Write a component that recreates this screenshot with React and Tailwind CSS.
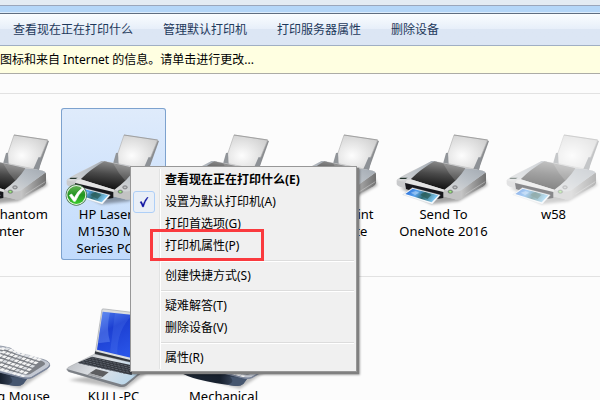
import clsx from 'clsx';

const toolbarItems = ['查看现在正在打印什么', '管理默认打印机', '打印服务器属性', '删除设备'];

const printers = [
  { id: 'foxit', lines: ['Foxit Phantom', 'Printer'] },
  { id: 'hp', lines: ['HP LaserJet', 'M1530 MFP', 'Series PCL 6'], selected: true, isDefault: true },
  { id: 'fax', lines: ['Fax'] },
  { id: 'print', lines: ['Remote Print', 'PDF Create'] },
  { id: 'onenote', lines: ['Send To', 'OneNote 2016'] },
  { id: 'w58', lines: ['w58'], offline: true },
];

const devices = [
  { id: 'mouse', lines: ['Gaming Mouse'], icon: KeyboardIcon },
  { id: 'pc', lines: ['KULL-PC'], icon: LaptopIcon },
  { id: 'keyboard', lines: ['Mechanical', 'Keyboard'], icon: KeyboardIcon },
];

const menuGroups = [
  [
    { label: '查看现在正在打印什么(E)', bold: true },
    { label: '设置为默认打印机(A)', checked: true },
    { label: '打印首选项(G)' },
    { label: '打印机属性(P)', highlighted: true },
  ],
  [{ label: '创建快捷方式(S)' }],
  [{ label: '疑难解答(T)' }, { label: '删除设备(V)' }],
  [{ label: '属性(R)' }],
];

// Gradients shared by every device icon
function IconDefs() {
  return (
    <svg className="absolute size-0" aria-hidden="true">
      <defs>
        <radialGradient id="paper" cx="0.4" cy="0.6" r="0.7">
          <stop offset="0" stopColor="#fdfdfd" />
          <stop offset="1" stopColor="#cfcfcf" />
        </radialGradient>
        <linearGradient id="lid" x1="0.6" y1="0" x2="0.4" y2="1">
          <stop offset="0" stopColor="#8d8d8d" />
          <stop offset="0.45" stopColor="#4a4a4a" />
          <stop offset="1" stopColor="#0c0c0c" />
        </linearGradient>
        <linearGradient id="arm" x1="1" y1="0" x2="0" y2="1">
          <stop offset="0" stopColor="#a3aab2" />
          <stop offset="0.5" stopColor="#bcc2c8" />
          <stop offset="1" stopColor="#dcdcdc" />
        </linearGradient>
        <linearGradient id="side" x1="0" y1="0" x2="1" y2="0">
          <stop offset="0" stopColor="#c9c9c9" />
          <stop offset="0.5" stopColor="#9a9a9a" />
          <stop offset="1" stopColor="#707070" />
        </linearGradient>
        <linearGradient id="photo" x1="0" y1="0" x2="1" y2="0.3">
          <stop offset="0" stopColor="#1c62d4" />
          <stop offset="0.4" stopColor="#5aa4ee" />
          <stop offset="0.65" stopColor="#2f6b70" />
          <stop offset="1" stopColor="#7cc4ee" />
        </linearGradient>
        <linearGradient id="badge" x1="0" y1="0" x2="0" y2="1">
          <stop offset="0" stopColor="#62b052" />
          <stop offset="0.5" stopColor="#219420" />
          <stop offset="1" stopColor="#3ccb2c" />
        </linearGradient>
        <linearGradient id="screen" x1="0" y1="0" x2="0.5" y2="1">
          <stop offset="0" stopColor="#4d7cec" />
          <stop offset="0.4" stopColor="#1c3fd2" />
          <stop offset="1" stopColor="#2a55e8" />
        </linearGradient>
        <linearGradient id="base" x1="0" y1="0" x2="1" y2="0.4">
          <stop offset="0" stopColor="#b3b6bb" />
          <stop offset="0.5" stopColor="#dfe2e6" />
          <stop offset="1" stopColor="#b9d6ea" />
        </linearGradient>
        <linearGradient id="rest" x1="0" y1="0" x2="1" y2="0">
          <stop offset="0" stopColor="#1e2734" />
          <stop offset="0.6" stopColor="#17202e" />
          <stop offset="1" stopColor="#5b6c88" />
        </linearGradient>
        <filter id="soft" x="-20%" y="-20%" width="140%" height="140%">
          <feGaussianBlur stdDeviation="4" />
        </filter>
      </defs>
    </svg>
  );
}

function PrinterIcon({ isDefault }) {
  return (
    <svg viewBox="3 0 315 255" className="block w-full" aria-hidden="true">
      <path d="M30 188 L125 238 L205 229 L292 181 L284 160 Z" fill="#000" opacity="0.35" filter="url(#soft)" />
      {/* paper tray */}
      <path d="M288 45 L297 48 L266 134 L254 132 Z" fill="#8b8d90" />
      <path d="M192 30 L293 45 L257 133 L164 114 Z" fill="url(#paper)" stroke="#b5b5b5" strokeWidth="2" />
      <path d="M192 30 L293 45" stroke="#8e8e8e" strokeWidth="2" />
      <path d="M159 116 L168 84 L174 83 L176 119 Z" fill="#92969a" />
      <path d="M250 132 L266 96 L274 98 L267 136 Z" fill="#8d9196" />
      {/* body */}
      <path d="M20 166 Q22 160 60 141 L125 108 L150 111 L278 137 Q287 139 288 146 L288 174 Q287 180 280 184 L212 222 Q204 226 190 221 L40 188 Q20 184 20 177 Z" fill="#c9cacc" />
      <path d="M212 196 L286 143 Q288 143 288 150 L288 174 Q287 180 280 184 L212 222 Z" fill="url(#side)" />
      <path d="M226 208 L286 170" stroke="#d8d8d8" strokeWidth="2" opacity="0.7" />
      <path d="M212 132 Q250 130 278 137 L287 142 L212 197 Q204 202 163 194 Q188 172 200 150 Z" fill="url(#arm)" />
      <path d="M162 195 Q190 205 212 197 L212 222 Q204 226 190 221 L160 214 Z" fill="#c3c3c3" />
      <path d="M20 166 L125 108 L142 110 Q80 142 50 170 Q32 170 20 166 Z" fill="url(#arm)" />
      <path d="M62 163 Q90 134 133 109 L226 130 Q204 166 163 194 Z" fill="url(#lid)" />
      <path d="M160 116 L226 130 Q212 152 196 167 Q174 144 160 116 Z" fill="#fff" opacity="0.17" />
      <path d="M50 166 L62 163 L163 194 L160 201 L46 173 Z" fill="#e3e3e3" />
      <path d="M32 158 L53 158 L47 162 L28 162 Z" fill="#23342c" />
      {/* output slot with a photo */}
      <path d="M45 174 L160 201 L160 219 L140 222 L48 192 Z" fill="#17171c" />
      <path d="M67 188 L151 210 L127 238 L38 209 Z" fill="#f8fafc" stroke="#bfc5cc" strokeWidth="1" />
      <path d="M68 191 L145 211 L125 232 L46 207 Z" fill="url(#photo)" />
      <path d="M91 210 Q101 196 124 210 L112 222 Z" fill="#2c5f5c" opacity="0.8" />
      <path d="M62 203 L77 198 L88 203 L75 210 Z" fill="#fff" opacity="0.35" />
      <ellipse cx="195" cy="187" rx="7" ry="5" fill="#9b9da0" stroke="#77797c" strokeWidth="2" />
      <ellipse cx="195" cy="187" rx="3" ry="2" fill="#d0d0d0" />
      <ellipse cx="181" cy="200" rx="7" ry="5" fill="#5b8c53" stroke="#808386" strokeWidth="2" />
      <ellipse cx="181" cy="200" rx="4" ry="3" fill="#a5e884" />
      {isDefault && (
        <g>
          <circle cx="49" cy="210" r="32" fill="#46784a" />
          <circle cx="49" cy="210" r="30" fill="#e9f3e9" />
          <circle cx="49" cy="210" r="27" fill="url(#badge)" />
          <path d="M28 211 L35 207 L43 218 Q53 198 68 188 L71 192 Q56 207 46 229 L41 229 Z" fill="#fff" stroke="#fff" strokeWidth="2" />
        </g>
      )}
    </svg>
  );
}

function LaptopIcon() {
  const rows = [0, 1, 2, 3, 4];
  const cols = [0, 1, 2, 3, 4, 5, 6, 7, 8, 9, 10, 11, 12];
  return (
    <svg viewBox="183 81 315 255" className="block w-full" aria-hidden="true">
      <path d="M205 300 L375 328 L440 280 L400 265 Z" fill="#000" opacity="0.25" filter="url(#soft)" />
      <path d="M306 88 Q308 86 314 87 L436 102 L420 250 L404 253 L286 217 Z" fill="#dcdedf" stroke="#a3a6aa" strokeWidth="2" />
      <path d="M308 95 L428 108 L411 238 L291 209 Z" fill="url(#screen)" />
      <path d="M308 95 L330 97 Q318 150 330 185 L294 190 Z" fill="#8fb4ff" opacity="0.3" />
      <path d="M345 98 L398 104 Q350 150 352 222 L330 217 Z" fill="#7faaff" opacity="0.15" />
      <path d="M285 214 L412 245 L440 255 L412 262 L284 224 Z" fill="#33373d" />
      <path d="M200 267 Q202 262 212 258 L284 222 L430 256 L438 264 L378 316 Q370 321 358 318 L206 275 Q200 272 200 267 Z" fill="url(#base)" stroke="#86898d" strokeWidth="1" />
      <path d="M200 267 L362 313 Q370 315 378 310 L438 262 L438 268 L378 318 Q370 323 358 320 L206 275 Z" fill="#7b7f85" />
      <path d="M276 230 L424 262 L394 285 L233 248 Z" fill="#34383f" />
      {rows.map((r) =>
        cols.map((c) => (
          <path
            key={`${r}-${c}`}
            d="M0 0 L8 2 L5 4 L-3 2 Z"
            transform={`translate(${275 + c * 11 - r * 9} ${232 + c * 2.5 + r * 4})`}
            fill="#5f656e"
          />
        )),
      )}
      <path d="M288 267 L326 277 L308 291 L268 280 Z" fill="#5d5e60" />
      <path d="M268 280 L308 291 L301 295 L262 284 Z" fill="#a2a4a7" />
    </svg>
  );
}

function KeyboardIcon() {
  const rows = [0, 1, 2, 3, 4, 5];
  const cols = Array.from({ length: 14 }, (_, i) => i);
  return (
    <svg viewBox="-147 -69 315 255" className="block w-full" aria-hidden="true">
      <path d="M-110 130 L60 176 L146 118 L100 100 Z" fill="#000" opacity="0.25" filter="url(#soft)" />
      <path d="M-122 112 Q-100 122 0 126 L82 144 L70 161 Q62 169 48 168 Q-90 152 -122 124 Z" fill="url(#rest)" />
      <path d="M30 140 L82 146 L70 162 Q62 169 48 168 L20 164 Q48 158 30 140 Z" fill="#46566f" />
      <path d="M-120 110 Q-90 60 -50 46 Q-20 42 30 54 L52 68 L128 88 Q150 94 149 105 Q149 110 140 116 L96 142 Q86 147 68 143 L0 126 Q-60 120 -120 110 Z" fill="#c3c8d2" stroke="#70798a" strokeWidth="2" />
      <path d="M-108 105 Q-80 62 -46 51 Q-20 47 28 59 L50 73 L126 93 Q138 97 134 104 L92 131 Q84 136 72 133 L0 117 Q-60 112 -108 105 Z" fill="#7d8086" />
      {rows.map((r) =>
        cols.map((c) => (
          <path
            key={`${r}-${c}`}
            d="M0 0 L10 3 L2 9 L-8 6 Z"
            transform={`translate(${-40 + c * 12 - r * 10} ${(c > 5 ? 52 + (c - 5) * 4 : 52) + r * 10})`}
            fill={(r + c) % 5 === 0 ? '#dcdfe3' : '#f5f5f5'}
          />
        )),
      )}
      <path d="M149 105 Q149 110 140 116 L96 142 Q86 147 68 143 L0 126" fill="none" stroke="#7c869b" strokeWidth="4" />
    </svg>
  );
}

function DeviceTile({ lines, icon: Icon = PrinterIcon, selected, offline, isDefault }) {
  return (
    <button
      type="button"
      className={clsx(
        'flex w-[105px] shrink-0 flex-col items-center rounded-[3px] pt-[17px] text-[13px] leading-[17px]',
        selected && 'bg-linear-to-b from-[#dfebfb] to-[#c1dbfc] ring-1 ring-[#7da2ce] ring-inset',
      )}
    >
      <span className={clsx('w-full', offline && 'opacity-50')}>
        <Icon isDefault={isDefault} />
      </span>
      <span className="-mt-1 pb-[3px] whitespace-nowrap">
        {lines.map((line) => (
          <span key={line} className="block">
            {line}
          </span>
        ))}
      </span>
    </button>
  );
}

function ContextMenu() {
  return (
    <div
      role="menu"
      className="absolute top-[166px] left-[130px] w-[227px] border border-[#979797] bg-[#f0f0f0] p-[2px] shadow-[2px_2px_1px_#808080,3px_3px_2px_#00000055]"
    >
      <div className="pointer-events-none absolute inset-y-[2px] left-[28px] w-[2px] border-l border-[#e2e3e3] bg-white" />
      {menuGroups.map((group, i) => (
        <div key={group[0].label}>
          {i > 0 && (
            <div className="flex h-2 items-center pl-[28px]">
              <div className="h-[2px] w-full border-t border-[#dcdcdc] bg-white" />
            </div>
          )}
          {group.map((item) => (
            <button
              key={item.label}
              type="button"
              role={item.checked ? 'menuitemcheckbox' : 'menuitem'}
              aria-checked={item.checked}
              className={clsx('relative flex h-[22px] w-full items-center', item.bold && 'font-bold')}
            >
              <span className="flex w-8 shrink-0">
                {item.checked && (
                  <span className="flex size-[22px] items-center justify-center rounded-[3px] border border-[#aecff7] bg-[#e9eff7]">
                    <svg viewBox="0 0 12 12" className="size-3" aria-hidden="true">
                      <path d="M2 6 L3.5 5.5 L5 8.5 Q6.5 4 9.5 1 L10 1.5 Q7 5.5 5.5 11 L4.5 11 Q3.5 8 2 6 Z" fill="#0c12a1" stroke="#0c12a1" strokeWidth="0.4" />
                    </svg>
                  </span>
                )}
              </span>
              <span className="whitespace-nowrap">{item.label}</span>
              {item.highlighted && (
                <span className="absolute -top-[6px] left-[17px] h-8 w-[114px] border-3 border-[#fa3a3e]" />
              )}
            </button>
          ))}
        </div>
      ))}
    </div>
  );
}

export default function App() {
  return (
    <div className="relative flex h-screen flex-col overflow-hidden bg-[#fcfcfc] font-['Noto_Sans','Noto_Sans_CJK_SC',sans-serif] text-xs text-black">
      <IconDefs />
      <header className="shrink-0">
        <div className="h-[6px] border-b border-[#9aa6bb] bg-[#e3ebf3]" />
        <div className="h-[7px] border-b border-[#dcecfb] bg-[#b4d6f8]" />
        <nav className="flex h-[33px] items-center gap-[30px] border-t border-b border-t-[#5f6d80] border-b-[#a0afc3] bg-linear-to-b from-[#fafdff] from-0% via-[#e6eef9] via-50% to-[#dce6f4] to-50% pl-[13px] text-[#1e395b]">
          {toolbarItems.map((label) => (
            <button key={label} type="button" className="whitespace-nowrap">
              {label}
            </button>
          ))}
        </nav>
      </header>
      <button
        type="button"
        className="h-7 w-full shrink-0 border-b border-[#acaca6] bg-[#ffffe1] text-left whitespace-nowrap"
      >
        图标和来自 Internet 的信息。请单击进行更改...
      </button>

      <main className="flex flex-col pt-[19px]">
        <section className="flex h-[183px] shrink-0 items-start border-t border-[#e2e2e2] pt-[14px]">
          <div className="-ml-[49px] flex items-start gap-[5px]">
            {printers.map((p) => (
              <DeviceTile key={p.id} {...p} />
            ))}
          </div>
        </section>
        <section className="flex shrink-0 items-start border-t border-[#e2e2e2] pt-[13px]">
          <div className="-ml-[49px] flex items-start gap-[5px]">
            {devices.map((d) => (
              <DeviceTile key={d.id} {...d} />
            ))}
          </div>
        </section>
      </main>

      <ContextMenu />
    </div>
  );
}
